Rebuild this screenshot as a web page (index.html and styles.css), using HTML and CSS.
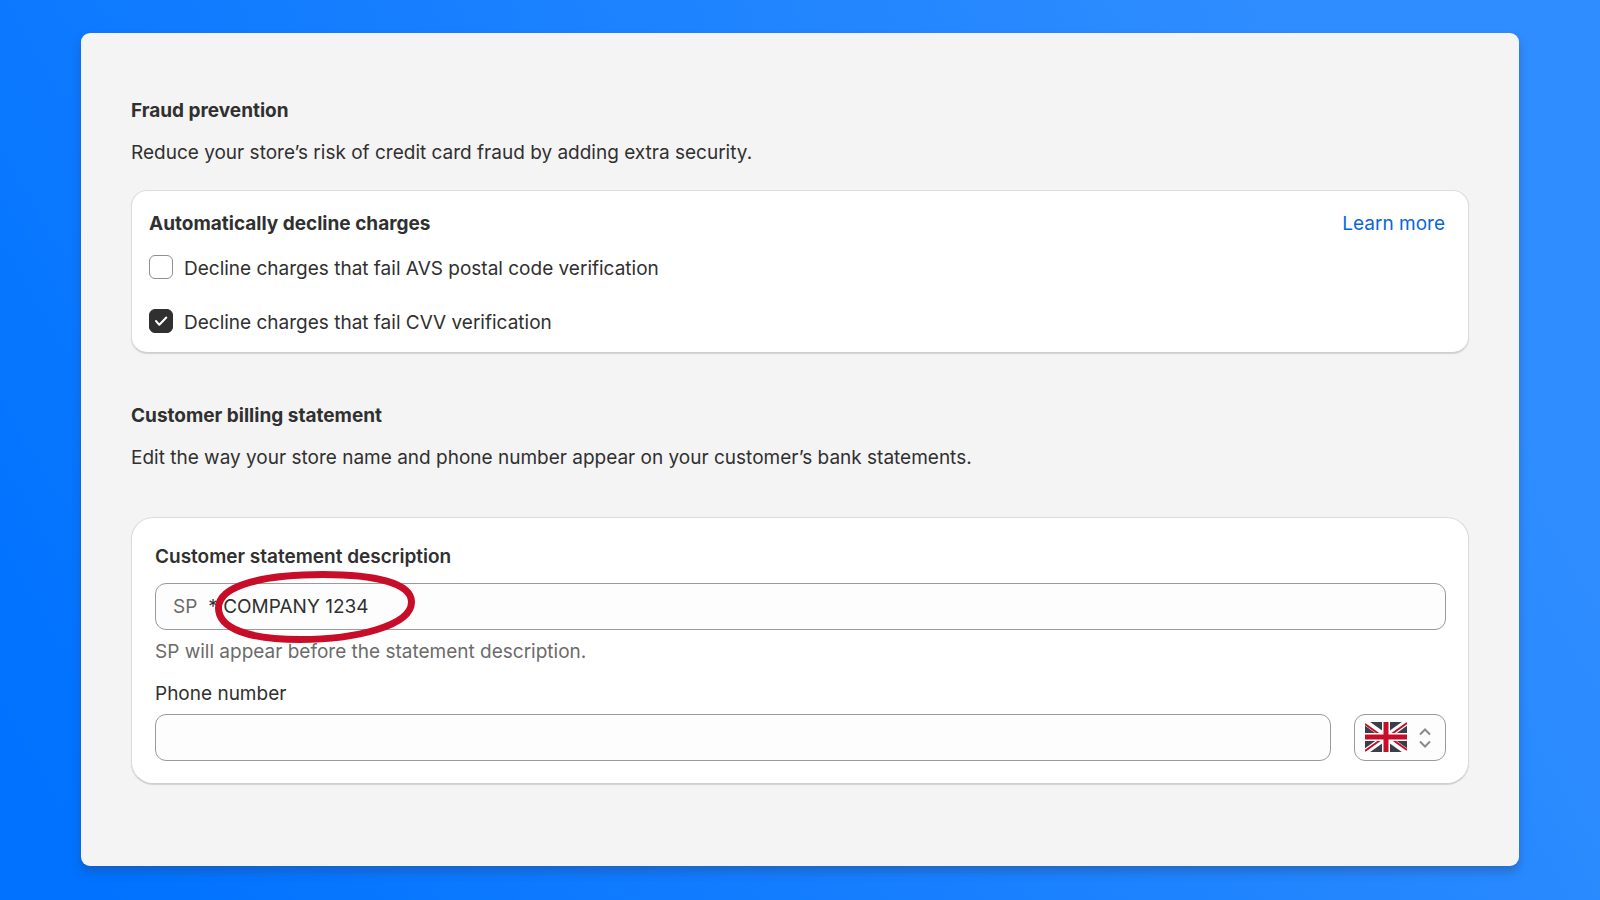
FILE: index.html
```html
<!DOCTYPE html>
<html lang="en">
<head>
<meta charset="utf-8">
<title>Payments settings</title>
<link rel="stylesheet" href="styles.css">
</head>
<body>
<main class="panel">
	<section>
		<h2>Fraud prevention</h2>
		<p class="intro">Reduce your store’s risk of credit card fraud by adding extra security.</p>
		<div class="card charges">
			<div class="card-head">
				<h3>Automatically decline charges</h3>
				<a href="#">Learn more</a>
			</div>
			<label class="check"><input type="checkbox"><span>Decline charges that fail AVS postal code verification</span></label>
			<label class="check"><input type="checkbox" checked><span>Decline charges that fail CVV verification</span></label>
		</div>
	</section>

	<section class="billing">
		<h2>Customer billing statement</h2>
		<p class="intro">Edit the way your store name and phone number appear on your customer’s bank statements.</p>
		<div class="card statement">
			<label class="strong" for="description">Customer statement description</label>
			<div class="field">
				<span class="prefix">SP</span>
				<input type="text" id="description" value="* COMPANY 1234">
				<svg class="circle" width="200" height="72" viewBox="0 0 200 72">
					<path d="M3.5 37C3.5 14 50 3.5 108 3.5C160 3.5 196.5 12 196.5 31C196.5 55 140 68.5 85 68.5C35 68.5 3.5 58 3.5 37Z"/>
				</svg>
			</div>
			<p class="help">SP will appear before the statement description.</p>
			<label for="phone">Phone number</label>
			<div class="phone-row">
				<input type="tel" id="phone" class="field">
				<div class="country">
					<select class="field" aria-label="Country">
						<option>GB</option>
					</select>
					<svg class="flag" width="42" height="30" viewBox="0 0 42 30">
						<rect width="42" height="30" fill="#3a3f47"/>
						<path d="M0 0L42 30M42 0L0 30" stroke="#fff" stroke-width="6"/>
						<path d="M0 2L21 17M42 28L21 13M42 1L21 16M0 29L21 14" stroke="#c80d28" stroke-width="2"/>
						<path d="M21 0V30M0 15H42" stroke="#fff" stroke-width="8"/>
						<path d="M21 0V30M0 15H42" stroke="#c80d28" stroke-width="5"/>
					</svg>
					<svg class="arrows" width="12" height="20" viewBox="0 0 12 20">
						<path d="M1 6.500L6 1.500L11 6.500M1 13.500L6 18.500L11 13.500"/>
					</svg>
				</div>
			</div>
		</div>
	</section>
</main>
</body>
</html>
```
FILE: styles.css
```css
*{ margin:0; padding:0; box-sizing:border-box;}
body{ min-height:100vh; padding:33px 81px 34px; display:flex; background:linear-gradient(60deg,#0072ff 5%,#2f8dff 85%); font:19px/29px Inter,"Liberation Sans",sans-serif; color:#303030;}
.panel{ flex:1; padding:63px 50px; background:#f4f4f4; border-radius:9px; box-shadow:0 6px 10px rgba(40,70,120,.4);}
h2,h3{ font-size:19px; line-height:29px; font-weight:700;}
.intro{ margin-top:13px;}
.billing{ margin-top:48px;}

.card{ background:#fff; border:1px solid #dcdcdc; border-bottom-color:#cfcfcf; box-shadow:0 1px 1px #d2d2d2;}
.charges{ margin-top:23px; padding:18px 23px 15px 17px; border-radius:16px;}
.card-head{ display:flex; justify-content:space-between;}
.card-head a{ color:#0a66d8; text-decoration:none;}
.check{ display:flex; align-items:flex-start; gap:11px; margin-top:16px;}
.check + .check{ margin-top:25px;}
.check input{ appearance:none; width:24px; height:24px; margin-top:1px; border:1px solid #8f8f8f; border-radius:6px; background:#fff;}
.check input:checked{ border-color:#303030; background:#303030 url('data:image/svg+xml,<svg xmlns="http://www.w3.org/2000/svg" viewBox="0 0 24 24"><path d="M7 12l3.300 3.800L17.300 8.500" fill="none" stroke="white" stroke-width="2" stroke-linecap="round" stroke-linejoin="round"/></svg>') center/24px no-repeat;}

.statement{ margin-top:45px; padding:24px 22px 22px 23px; border-radius:22px;}
.statement label{ display:block;}
.statement .strong{ font-weight:600;}
.field{ height:47px; border:1px solid #9a9a9a; border-radius:11px; background:#fdfdfd;}
div.field{ position:relative; display:flex; align-items:center; gap:11px; margin-top:12px; padding:0 17px;}
.prefix{ color:#6b6b6b;}
.field input{ flex:1; border:0; background:none; font:inherit; color:inherit; outline:0;}
.circle{ position:absolute; left:59px; top:-13px; pointer-events:none;}
.circle path{ fill:none; stroke:#c80d28; stroke-width:7;}
.help{ margin:7px 0 13px; color:#6b6b6b;}
.phone-row{ display:flex; gap:23px; margin-top:6px;}
.phone-row input{ flex:1; min-width:0; padding:0 17px; font:inherit;}
.country{ position:relative; width:92px;}
.country select{ appearance:none; width:100%; display:block; color:transparent;}
.flag,.arrows{ position:absolute; pointer-events:none;}
.flag{ left:11px; top:8px;}
.arrows{ right:15px; top:14px; fill:none; stroke:#8a8a8a; stroke-width:2;}
```
